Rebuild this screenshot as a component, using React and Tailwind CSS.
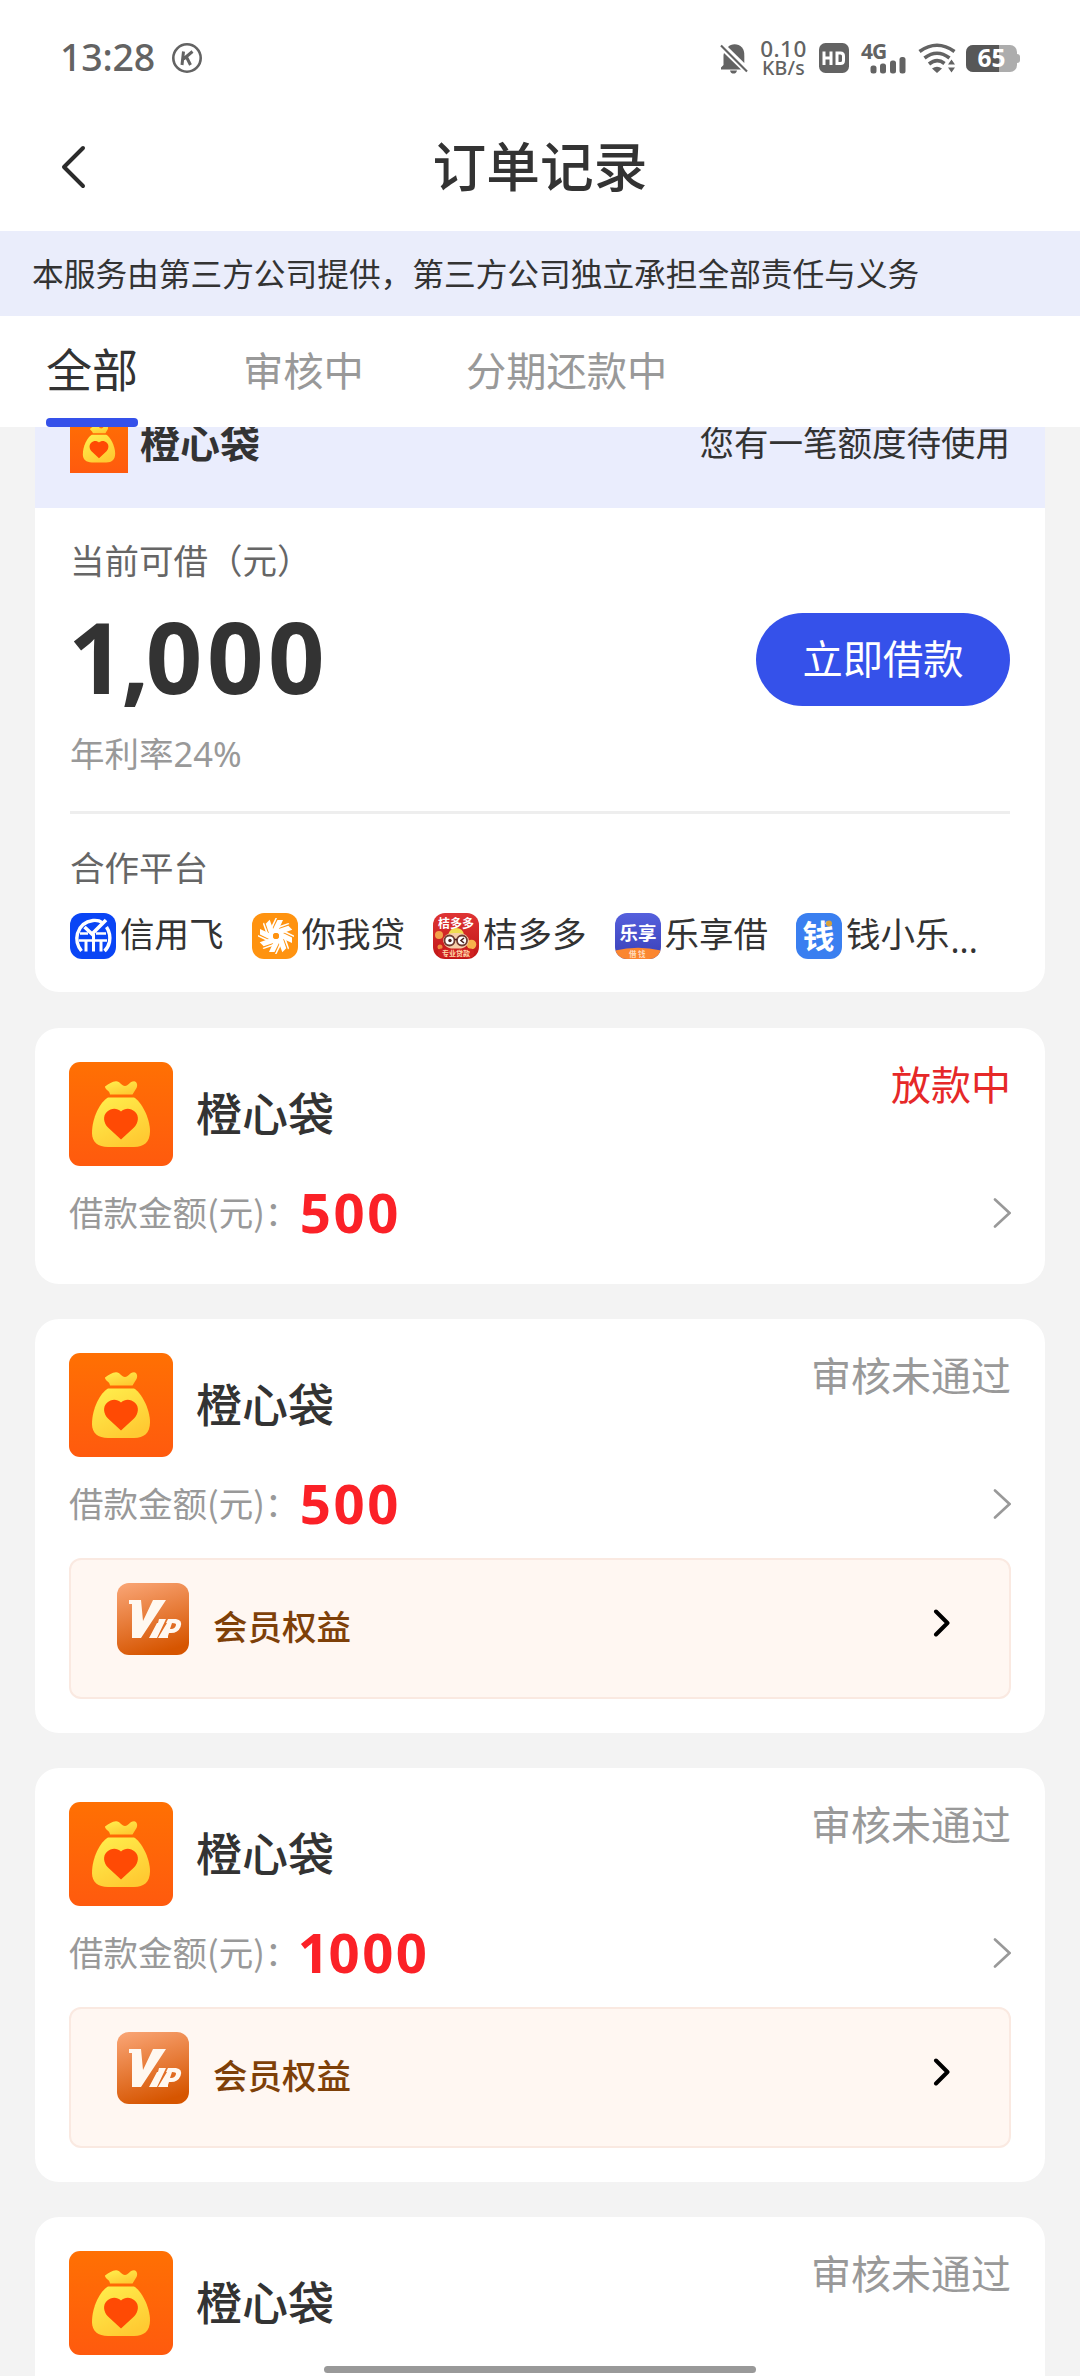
import React from "react";

const CJK = "font-['Noto_Sans_CJK_SC',sans-serif]";
const LATIN = "font-['Noto_Sans','Noto_Sans_CJK_SC',sans-serif]";

function MoneyBag({ className, id }) {
  return (
    <svg viewBox="0 0 104 104" className={className} aria-hidden="true">
      <defs>
        <linearGradient id={`${id}-bg`} x1="0" y1="0" x2="0" y2="1">
          <stop offset="0" stopColor="#ff7003" />
          <stop offset="1" stopColor="#ff5a0e" />
        </linearGradient>
        <linearGradient id={`${id}-bag`} x1="0" y1="0" x2="0.6" y2="1">
          <stop offset="0" stopColor="#fff04e" />
          <stop offset="1" stopColor="#ffca32" />
        </linearGradient>
      </defs>
      <rect width="104" height="104" fill={`url(#${id}-bg)`} />
      <path
        d="M36 24.5C40 21.5 43 19.5 47 19.2C51 19 52.500 24 56 24C59.500 24 60.500 19.200 65 19.200C68 19.500 69 23 67.500 26L63.500 32.500H41C40.500 28 36 28 36 24.500Z"
        fill={`url(#${id}-bag)`}
      />
      <path
        d="M39 35.500H65C72 39 81 56 81 69C81 80 75 85 65 85H39C29 85 23 80 23 71C23 56 31 40 39 35.500Z"
        fill={`url(#${id}-bag)`}
      />
      <path
        d="M52 77.500L39 65.500C34.500 61 33.500 54 38 49.800C42.500 45.800 48 46 52 49.500C56 46 61.500 45.800 66 49.800C70.500 54 69.500 61 65 65.500Z"
        fill="#ff4a04"
      />
    </svg>
  );
}

function StatusBar() {
  return (
    <div className={`flex h-[116px] items-center pl-[60px] pr-[60px] text-[#636363] ${LATIN}`}>
      <span className="-mt-[2px] text-[37.500px] leading-[44px] font-medium tracking-[-0.200px]">13:28</span>
      <svg viewBox="0 0 30 30" className="ml-[17px] h-[30px] w-[30px]" fill="none" stroke="#636363">
        <circle cx="15" cy="15" r="13.700" strokeWidth="2.600" />
        <path d="M11.500 8.500L10 22M20.500 8.500L11.500 16M14.500 14L18.500 22" strokeWidth="3" />
      </svg>
      <div className="ml-auto flex items-center">
        <svg viewBox="0 0 28 31" className="h-[31px] w-[28px]" fill="#636363">
          <path d="M10 27.500H17C16.500 30 15 30.500 13.500 30.500S10.500 30 10 27.500Z" />
          <path d="M4 10L21 26.500H1V24.500L3.500 22V12Z" />
          <path d="M8 4C11 0.500 18 0 22 4.500C24 7 24.300 9 24.300 13V20Z" />
          <path d="M1 2.500L27 28.500" stroke="#636363" strokeWidth="2.200" />
        </svg>
        <div className="ml-[12px] w-[47px] text-center font-medium">
          <div className="text-[22.500px] leading-[19px] tracking-[0.500px]">0.10</div>
          <div className="text-[19.500px] leading-[19px] tracking-[0.200px]">KB/s</div>
        </div>
        <svg viewBox="0 0 30 30" className="ml-[12px] h-[30px] w-[30px]">
          <rect width="30" height="30" rx="6.500" fill="#636363" />
          <path d="M5 8.500V22M12 8.500V22M5 15H12M18 10H21.500Q24.500 10 24.500 13V17.500Q24.500 20.500 21.500 20.500H18Z" stroke="#fff" strokeWidth="3" fill="none" />
        </svg>
        <div className="relative ml-[12px] h-[31px] w-[46px]">
          <span className="absolute top-[-4px] left-0 text-[21px] leading-[24px] font-bold tracking-[-1px]">4G</span>
          <svg viewBox="0 0 46 31" className="h-[31px] w-[46px]" fill="#636363">
            <rect x="9.500" y="22.500" width="6" height="8" rx="2.500" />
            <rect x="19" y="20.500" width="6" height="10" rx="2.500" />
            <rect x="29" y="17.500" width="6" height="13" rx="2.500" />
            <rect x="38.500" y="14" width="6" height="16.500" rx="2.500" />
          </svg>
        </div>
        <svg viewBox="0 0 38 31" className="ml-[11px] h-[31px] w-[38px]" fill="none" stroke="#636363" strokeWidth="3.600">
          <path d="M1.500 8.500Q19 -4 36.500 8.500" />
          <path d="M6.500 15Q19 5.500 31.500 15" />
          <path d="M11 21Q19 14.500 26.500 20.500" />
          <path d="M14 25.500Q19 22 24 25.500L19 30Z" fill="#636363" stroke="none" />
          <path d="M33.500 16.500L37 21.500H30Z M33.500 29.500L37 24.500H30Z" fill="#636363" stroke="none" />
        </svg>
        <div className="ml-[10px] flex items-center">
          <div className="relative flex h-[27px] w-[51px] items-center justify-center rounded-[7px] bg-[#adadad]">
            <div className="absolute inset-y-0 left-0 w-[33px] rounded-l-[7px] bg-[#575757]" />
            <span className="relative text-[24.500px] leading-[34px] font-bold text-white">65</span>
          </div>
          <div className="h-[9px] w-[3px] rounded-r-[3px] bg-[#adadad]" />
        </div>
      </div>
    </div>
  );
}

function XinyongfeiLogo() {
  return (
    <svg viewBox="0 0 46 46" className="h-[46px] w-[46px]">
      <rect width="46" height="46" rx="12" fill="#0a45f5" />
      <g fill="none" stroke="#fff">
        <path d="M11.500 38Q5 30 7.500 20.500Q11 9 23 7.500Q29 7 32 9.500M36.500 14Q41 21 39.500 29Q38 35 34.500 38" strokeWidth="3.400" />
        <path d="M14.500 14L22 21L36 7" strokeWidth="3.600" />
        <path d="M10 20.500H18M26 20.500H36M9 27.500H37" strokeWidth="2.400" />
        <path d="M16 27V38.500M31 27V38.500M23.500 21V38.500" strokeWidth="3" />
      </g>
    </svg>
  );
}

const RAYS = [0, 45, 90, 135, 180, 225, 270, 315];

function NiwodaiLogo() {
  return (
    <svg viewBox="0 0 46 46" className="h-[46px] w-[46px]">
      <rect width="46" height="46" rx="12" fill="#ff9310" />
      {RAYS.map((a) => (
        <g key={a} transform={`rotate(${a} 24 23)`} fill="#fff">
          <path d="M19.500 19L25.500 7H31L25.500 19Z" />
          <path d="M17.500 17L23.500 5H25L19 18.500Z" />
        </g>
      ))}
      <circle cx="24" cy="23" r="5" fill="none" stroke="#fff" strokeWidth="4" />
      <circle cx="24" cy="23" r="3" fill="#ff9310" />
    </svg>
  );
}

function JuduoduoLogo() {
  return (
    <svg viewBox="0 0 46 46" className="h-[46px] w-[46px]">
      <defs>
        <linearGradient id="jdd" x1="0" y1="0" x2="0" y2="1">
          <stop offset="0" stopColor="#df3434" />
          <stop offset="1" stopColor="#c01616" />
        </linearGradient>
      </defs>
      <rect width="46" height="46" rx="12" fill="url(#jdd)" />
      <circle cx="6" cy="22" r="4" fill="#f3a04a" />
      <circle cx="38.500" cy="31.500" r="4.800" fill="#f7b24c" />
      <circle cx="7" cy="34" r="2.500" fill="#ef8a3c" />
      <path d="M15 22Q17 15 23 15Q30 15 31 22Z" fill="#f0dc50" />
      <path d="M10 28Q11 19 23 20Q35 19 36 28Q34 36 23 37Q12 36 10 28Z" fill="#f6cda8" />
      <circle cx="16.500" cy="27.500" r="5" fill="#fff" stroke="#6e3b32" strokeWidth="1.800" />
      <circle cx="29" cy="27.500" r="5" fill="#fff" stroke="#6e3b32" strokeWidth="1.800" />
      <circle cx="17" cy="27.500" r="1.700" fill="#4c2420" />
      <path d="M31 25L28 27.500L31 30M21.500 26.500H24" stroke="#4c2420" strokeWidth="1.600" fill="none" />
      <rect x="5" y="35.500" width="36" height="9" rx="4" fill="#cf2020" />
      <text x="23" y="15" textAnchor="middle" fontSize="12" fontWeight="700" fill="#fff" fontFamily="Noto Sans CJK SC">桔多多</text>
      <text x="23" y="43" textAnchor="middle" fontSize="7" fontWeight="700" fill="#ffd9a8" fontFamily="Noto Sans CJK SC">专业贷款</text>
    </svg>
  );
}

function LexiangLogo() {
  return (
    <svg viewBox="0 0 46 46" className="h-[46px] w-[46px]">
      <defs>
        <linearGradient id="lx" x1="0" y1="0" x2="0" y2="1">
          <stop offset="0" stopColor="#5560dd" />
          <stop offset="1" stopColor="#3a40b8" />
        </linearGradient>
        <clipPath id="lx-clip">
          <rect width="46" height="46" rx="12" />
        </clipPath>
      </defs>
      <g clipPath="url(#lx-clip)">
        <rect width="46" height="46" fill="url(#lx)" />
        <path d="M0 37.500Q23 32 46 37.500V46H0Z" fill="#fb8630" />
      </g>
      <text x="23" y="26.500" textAnchor="middle" fontSize="18.500" fontWeight="700" fill="#fff" fontFamily="Noto Sans CJK SC">乐享</text>
      <text x="23" y="43.500" textAnchor="middle" fontSize="7.500" letterSpacing="1.500" fontWeight="500" fill="#ffe6d0" fontFamily="Noto Sans CJK SC">借钱</text>
    </svg>
  );
}

function QianxiaoleLogo() {
  return (
    <svg viewBox="0 0 46 46" className="h-[46px] w-[46px]">
      <rect width="46" height="46" rx="12" fill="#3a7ff0" />
      <text x="22.500" y="35" textAnchor="middle" fontSize="32" fontWeight="700" fill="#fff" fontFamily="Noto Sans CJK SC">钱</text>
      <circle cx="33" cy="10.500" r="3" fill="#d7a13c" />
    </svg>
  );
}

const PARTNERS = [
  { name: "信用飞", Logo: XinyongfeiLogo },
  { name: "你我贷", Logo: NiwodaiLogo },
  { name: "桔多多", Logo: JuduoduoLogo },
  { name: "乐享借", Logo: LexiangLogo },
  { name: "钱小乐", Logo: QianxiaoleLogo },
];

function SummaryCard() {
  return (
    <section className="-mt-[48px] mb-px h-[613px] overflow-hidden rounded-[24px] bg-white">
      <div className="flex h-[129px] items-center justify-between bg-[#eaedfd] pl-[35px] pr-[35px]">
        <div className="flex items-center">
          <MoneyBag id="bag-head" className="h-[58px] w-[58px]" />
          <span className="-mt-[5px] ml-[12px] text-[40px] leading-[44px] font-bold">橙心袋</span>
        </div>
        <span className="-mt-[5px] text-[34.500px] leading-[44px]">您有一笔额度待使用</span>
      </div>
      <div className="px-[35px]">
        <div className="flex h-[306px] items-start justify-between border-b-[3px] border-[#eeeeee]">
          <div className="flex flex-col pt-[29px]">
            <span className="text-[34.500px] leading-[44px] text-[#666666]">当前可借（元）</span>
            <span className={`mt-[28px] -ml-[2px] h-[94px] text-[99px] leading-[94px] font-bold tracking-[4.500px] ${LATIN}`}>
              <span className="tracking-[-3.500px]">1,</span>000
            </span>
            <span className={`mt-[29px] text-[34.500px] leading-[44px] text-[#999999] ${LATIN}`}>年利率24%</span>
          </div>
          <button className="mt-[105px] h-[93px] w-[254px] rounded-full bg-[#3551ea] pb-[5px] text-[40.300px] leading-[44px] text-white">立即借款</button>
        </div>
        <div className="mt-[30px] text-[34.500px] leading-[44px] text-[#666666]">合作平台</div>
        <div className="mt-[25px] flex h-[46px] items-start">
          {PARTNERS.map(({ name, Logo }) => (
            <div key={name} className="flex w-[181.500px] shrink-0 items-start">
              <Logo />
              <span className="-mt-[4px] ml-[4px] text-[34.500px] leading-[46px] whitespace-nowrap">{name}</span>
            </div>
          ))}
          <span className={`-ml-[27px] mt-[4px] text-[34px] leading-[46px] ${LATIN}`}>...</span>
        </div>
      </div>
    </section>
  );
}

function VipBadge({ id }) {
  return (
    <svg viewBox="0 0 72 72" className="h-[72px] w-[72px]">
      <defs>
        <linearGradient id={id} x1="0.200" y1="0" x2="0.500" y2="1">
          <stop offset="0" stopColor="#f8a271" />
          <stop offset="1" stopColor="#d65500" />
        </linearGradient>
      </defs>
      <rect width="72" height="72" rx="12" fill={`url(#${id})`} />
      <g fill="#fff8f0">
        <path d="M12 17H24L26 38L36 17H49L24 55H15L15 21H12Z" />
        <path d="M42 36H49L40 55H32L40 40H41Z" />
        <path
          fillRule="evenodd"
          d="M51 36H59Q66 37 63.500 44Q61 50 54 50H52L51 53V55H41L50 40H49ZM55 40L53 46Q58 46.500 59 42Q59.500 40 55 40Z"
        />
      </g>
    </svg>
  );
}

function Amount({ value }) {
  const narrow = value.startsWith("1");
  return (
    <span className={`-mt-[3px] -ml-px text-[54.500px] leading-[60px] font-bold tracking-[2.500px] text-[#fb2127] ${LATIN}`}>
      {narrow && <span className="-ml-[2px] tracking-[-0.500px]">1</span>}
      {narrow ? value.slice(1) : value}
    </span>
  );
}

function OrderCard({ id, status, active, amount, vip }) {
  return (
    <section className={vip ? "h-[414px] rounded-[24px] bg-white px-[34px] pt-[34px]" : "h-[256px] rounded-[24px] bg-white px-[34px] pt-[34px]"}>
      <div className="flex justify-between">
        <div className="flex items-center">
          <MoneyBag id={`bag-${id}`} className="h-[104px] w-[104px] rounded-[11px]" />
          <span className="-mt-[7px] ml-[23px] text-[46px] leading-[60px] font-medium">橙心袋</span>
        </div>
        <span className={active ? "-mt-[2px] text-[40px] leading-[46px] text-[#e62828]" : "-mt-[2px] text-[40px] leading-[46px] text-[#999999]"}>{status}</span>
      </div>
      <div className="flex h-[94px] items-center">
        <span className="-mt-[4px] text-[34.500px] leading-[44px] text-[#999999]">借款金额(元)</span>
        <span className="-mt-[4px] w-[36px] text-[34.500px] leading-[44px] text-[#999999]">：</span>
        <Amount value={amount} />
        <svg viewBox="0 0 18 30" className="ml-auto h-[30px] w-[18px]" fill="none" stroke="#999999" strokeWidth="2.600" strokeLinecap="round">
          <path d="M2 1.500L16.500 15L2 28.500" />
        </svg>
      </div>
      {vip && (
        <div className="mt-[7px] flex h-[141px] items-start rounded-[12px] border-2 border-[#fae9e1] bg-[#fff7f2] pl-[46px] pr-[58px] pt-[23px]">
          <VipBadge id={`vip-${id}`} />
          <span className="ml-[24px] mt-[20px] text-[34.500px] leading-[44px] font-medium text-[#7e4008]">会员权益</span>
          <svg viewBox="0 0 18 28" className="mt-[26px] ml-auto h-[28px] w-[18px]" fill="none" stroke="#000" strokeWidth="4" strokeLinecap="round" strokeLinejoin="round">
            <path d="M3 2.500L14.500 14L3 25.500" />
          </svg>
        </div>
      )}
    </section>
  );
}

const ORDERS = [
  { id: "o1", status: "放款中", active: true, amount: "500", vip: false },
  { id: "o2", status: "审核未通过", active: false, amount: "500", vip: true },
  { id: "o3", status: "审核未通过", active: false, amount: "1000", vip: true },
  { id: "o4", status: "审核未通过", active: false, amount: "500", vip: true },
];

export default function App() {
  return (
    <div className={`relative flex h-[2376px] w-[1080px] flex-col overflow-hidden bg-[#f3f3f3] text-[#333333] ${CJK}`}>
      <header className="h-[231px] shrink-0 bg-white">
        <StatusBar />
        <div className="flex h-[101px] items-center px-[60px]">
          <svg viewBox="0 0 26 44" className="h-[44px] w-[26px]" fill="none" stroke="#2b2b2b" strokeWidth="4" strokeLinecap="round" strokeLinejoin="round">
            <path d="M23 3L4 22L23 41" />
          </svg>
          <h1 className="-mt-[5px] flex-1 pr-[26px] text-center text-[53.700px] leading-[64px] font-medium">订单记录</h1>
        </div>
      </header>
      <div className="flex h-[85px] shrink-0 items-center bg-[#eaedfb] pb-[4px] pl-[32px] text-[31.700px] leading-[44px] whitespace-nowrap">
        本服务由第三方公司提供，第三方公司独立承担全部责任与义务
      </div>
      <nav className="flex h-[111px] shrink-0 bg-white pl-[46px]">
        <div className="relative flex h-full w-[92px] items-center justify-center pb-[10px] text-[46px] leading-[60px] whitespace-nowrap">
          <span>全部</span>
          <div className="absolute bottom-0 left-0 h-[9px] w-[92px] rounded-[4px] bg-[#3551ea]" />
        </div>
        <div className="ml-[105px] flex items-center pb-[5px] text-[40.300px] leading-[60px] text-[#999999]">审核中</div>
        <div className="ml-[102px] flex items-center pb-[5px] text-[40.300px] leading-[60px] text-[#999999]">分期还款中</div>
      </nav>
      <main className="flex min-h-0 flex-1 flex-col gap-[35px] overflow-hidden px-[35px] [&>section]:shrink-0">
        <SummaryCard />
        {ORDERS.map((o) => (
          <OrderCard key={o.id} {...o} />
        ))}
      </main>
      <div className="absolute bottom-[3px] left-[324px] h-[7px] w-[432px] rounded-full bg-[#999999]" />
    </div>
  );
}
